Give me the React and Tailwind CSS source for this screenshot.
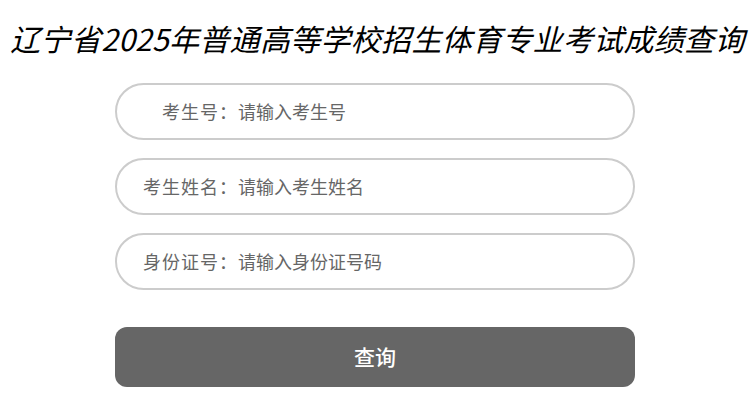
import React from 'react';

const fields = [
  { label: '考生号：', placeholder: '请输入考生号' },
  { label: '考生姓名：', placeholder: '请输入考生姓名' },
  { label: '身份证号：', placeholder: '请输入身份证号码' },
];

const App = () => {
  return (
    <div
      className="min-h-screen bg-white"
      style={{ fontFamily: '"Noto Sans CJK SC", "Noto Sans", sans-serif' }}
    >
      <h1 className="pt-[16px] text-center text-[30px] leading-[44px] italic font-normal text-black tracking-[0.3px] whitespace-nowrap">
        辽宁省2025年普通高等学校招生体育专业考试成绩查询
      </h1>

      <div className="ml-[115px] mt-[23px] w-[520px]">
        {fields.map((f) => (
          <div
            key={f.label}
            className="mb-[18px] flex h-[57px] items-center rounded-full border-2 border-[#cccccc] bg-white"
          >
            <label className="w-[121px] shrink-0 text-right text-[18px] tracking-[1px] text-[#666666]">
              {f.label}
            </label>
            <input
              type="text"
              placeholder={f.placeholder}
              className="mr-6 flex-1 bg-transparent text-[18px] text-[#333] outline-none placeholder:text-[#666666]"
            />
          </div>
        ))}

        <button className="mt-[19px] h-[60px] w-full rounded-[12px] bg-[#666666] text-[21px] font-medium text-white">
          查询
        </button>
      </div>
    </div>
  );
};

export default App;
